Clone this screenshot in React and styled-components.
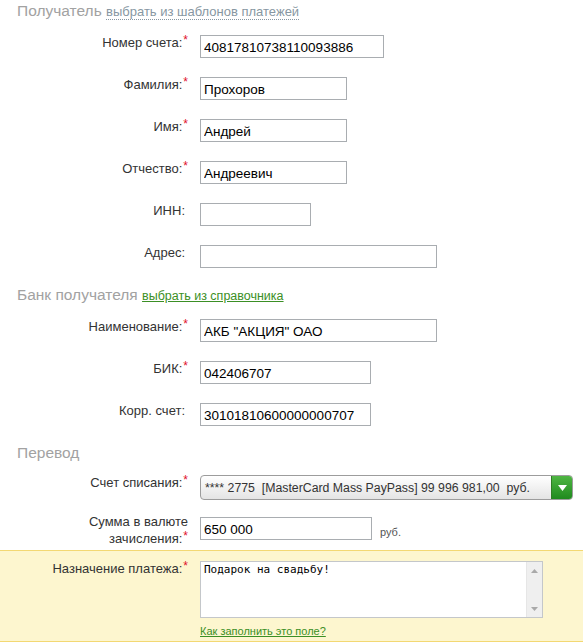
import styled, { createGlobalStyle } from "styled-components";

const GlobalStyle = createGlobalStyle`
    body {
        margin: 0;
        background: #ffffff;
        font-family: "Liberation Sans", Arial, sans-serif;
    }
`

function Required() {
    return <Star>*</Star>
}

export default function App() {
    return (
        <>
            <GlobalStyle />
            <Page>
                <Section $top={1}>
                    <SectionTitle>
                        Получатель <TemplateLink href="#">выбрать из шаблонов платежей</TemplateLink>
                    </SectionTitle>
                    <Row>
                        <Label>Номер счета:<Required /></Label>
                        <Input $w={184} defaultValue="40817810738110093886" />
                    </Row>
                    <Row>
                        <Label>Фамилия:<Required /></Label>
                        <Input $w={147} defaultValue="Прохоров" />
                    </Row>
                    <Row>
                        <Label>Имя:<Required /></Label>
                        <Input $w={147} defaultValue="Андрей" />
                    </Row>
                    <Row>
                        <Label>Отчество:<Required /></Label>
                        <Input $w={147} defaultValue="Андреевич" />
                    </Row>
                    <Row>
                        <Label $plain>ИНН:</Label>
                        <Input $w={111} defaultValue="" />
                    </Row>
                    <Row>
                        <Label $plain>Адрес:</Label>
                        <Input $w={237} defaultValue="" />
                    </Row>
                </Section>

                <Section $top={0}>
                    <SectionTitle>
                        Банк получателя <DirectoryLink href="#">выбрать из справочника</DirectoryLink>
                    </SectionTitle>
                    <Row>
                        <Label>Наименование:<Required /></Label>
                        <Input $w={237} defaultValue={'АКБ "АКЦИЯ" ОАО'} />
                    </Row>
                    <Row>
                        <Label>БИК:<Required /></Label>
                        <Input $w={171} defaultValue="042406707" />
                    </Row>
                    <Row>
                        <Label $plain>Корр. счет:</Label>
                        <Input $w={171} defaultValue="30101810600000000707" />
                    </Row>
                </Section>

                <Section $top={0} $bottom={10}>
                    <SectionTitle $gap={12}>Перевод</SectionTitle>
                    <Row $h={25}>
                        <Label>Счет списания:<Required /></Label>
                        <SelectBox>
                            <SelectText>**** 2775&nbsp;&nbsp;[MasterCard Mass PayPass] 99 996 981,00&nbsp;&nbsp;руб.</SelectText>
                            <SelectArrow>
                                <svg width="9" height="6" viewBox="0 0 9 6">
                                    <path d="M0 0 H9 L4.5 6 Z" fill="#ffffff" />
                                </svg>
                            </SelectArrow>
                        </SelectBox>
                    </Row>
                    <Row $gap={17}>
                        <Label $shift={-4}>Сумма в валюте<br />зачисления:<Required /></Label>
                        <Input $w={172} defaultValue="650 000" />
                        <Currency>руб.</Currency>
                    </Row>
                </Section>

                <Purpose>
                    <Row $h={76}>
                        <Label>Назначение платежа:<Required /></Label>
                        <div>
                            <TextBox>
                                <TextArea defaultValue="Подарок на свадьбу!" />
                                <Scrollbar>
                                    <svg width="7" height="4" viewBox="0 0 7 4">
                                        <path d="M0 4 L3.5 0 L7 4 Z" fill="#a9a9a9" />
                                    </svg>
                                    <svg width="7" height="4" viewBox="0 0 7 4">
                                        <path d="M0 0 H7 L3.5 4 Z" fill="#a9a9a9" />
                                    </svg>
                                </Scrollbar>
                            </TextBox>
                            <HelpLink href="#">Как заполнить это поле?</HelpLink>
                        </div>
                    </Row>
                </Purpose>
            </Page>
        </>
    );
}

const Page = styled.div`
    width: 583px;
    height: 642px;
    overflow: hidden;
`
const Section = styled.section`
    padding: ${props => props.$top}px 0 ${props => props.$bottom ?? 17}px;
`
const SectionTitle = styled.h2`
    height: 20px;
    margin: 0 0 ${props => props.$gap ?? 14}px;
    padding-left: 17px;
    font-size: 15.5px;
    line-height: 20px;
    font-weight: normal;
    color: #a2a2a2;
    white-space: nowrap;
`
const TemplateLink = styled.a`
    font-size: 13px;
    color: #8797a2;
    text-decoration: none;
    border-bottom: 1px dotted #8797a2;
`
const DirectoryLink = styled.a`
    font-size: 12.5px;
    color: #3b8f25;
    text-decoration: underline;
`
const Row = styled.div`
    display: flex;
    align-items: flex-start;
    height: ${props => props.$h ?? 23}px;
    margin-top: ${props => props.$gap ?? 19}px;
    &:first-of-type {
        margin-top: 0;
    }
`
const Label = styled.label`
    box-sizing: border-box;
    flex: none;
    width: 200px;
    padding-right: ${props => props.$plain ? 15 : 12}px;
    margin-top: ${props => props.$shift ?? -1}px;
    text-align: right;
    font-size: 13px;
    line-height: 17px;
    color: #333333;
`
const Star = styled.span`
    color: #e0102b;
    font-size: 12px;
    position: relative;
    top: -3px;
    margin-left: 1px;
`
const Input = styled.input`
    box-sizing: border-box;
    flex: none;
    width: ${props => props.$w}px;
    height: 23px;
    margin: 0;
    padding: 1px 3px 0;
    border: 1px solid #a9adb1;
    font-family: "Liberation Sans", Arial, sans-serif;
    font-size: 13.5px;
    color: #000000;
    outline: none;
`
const Currency = styled.span`
    margin: 9px 0 0 8px;
    font-size: 11px;
    color: #555555;
`
const SelectBox = styled.div`
    box-sizing: border-box;
    width: 373px;
    height: 25px;
    display: flex;
    align-items: stretch;
    border: 1px solid #9c9c9c;
    border-radius: 4px;
    overflow: hidden;
    background: linear-gradient(#ffffff, #e4e4e4);
`
const SelectText = styled.div`
    flex: 1;
    display: flex;
    align-items: center;
    padding-left: 4px;
    font-size: 12.3px;
    color: #333333;
    white-space: nowrap;
`
const SelectArrow = styled.div`
    width: 20px;
    display: flex;
    align-items: center;
    justify-content: center;
    background: linear-gradient(#4fb643, #1f8a1e);
    border-left: 1px solid #2f7d25;
`
const Purpose = styled.section`
    box-sizing: border-box;
    height: 92px;
    padding-top: 10px;
    background: #fdf6cf;
    border-top: 1px solid #f3d873;
    border-bottom: 1px solid #f3d873;
`
const TextBox = styled.div`
    box-sizing: border-box;
    width: 343px;
    height: 57px;
    display: flex;
    border: 1px solid #c4c7ca;
    background: #ffffff;
`
const TextArea = styled.textarea`
    flex: 1;
    margin: 0;
    padding: 1px 3px;
    border: none;
    resize: none;
    outline: none;
    font-family: "DejaVu Sans Mono", monospace;
    font-size: 11px;
    color: #000000;
`
const Scrollbar = styled.div`
    width: 16px;
    display: flex;
    flex-direction: column;
    justify-content: space-between;
    align-items: center;
    padding: 7px 0 6px;
    box-sizing: border-box;
    background: #efefef;
    border-left: 1px solid #e6e6e6;
`
const HelpLink = styled.a`
    display: block;
    margin-top: 7px;
    font-size: 11px;
    line-height: 13px;
    color: #3b8f25;
    text-decoration: underline;
`
